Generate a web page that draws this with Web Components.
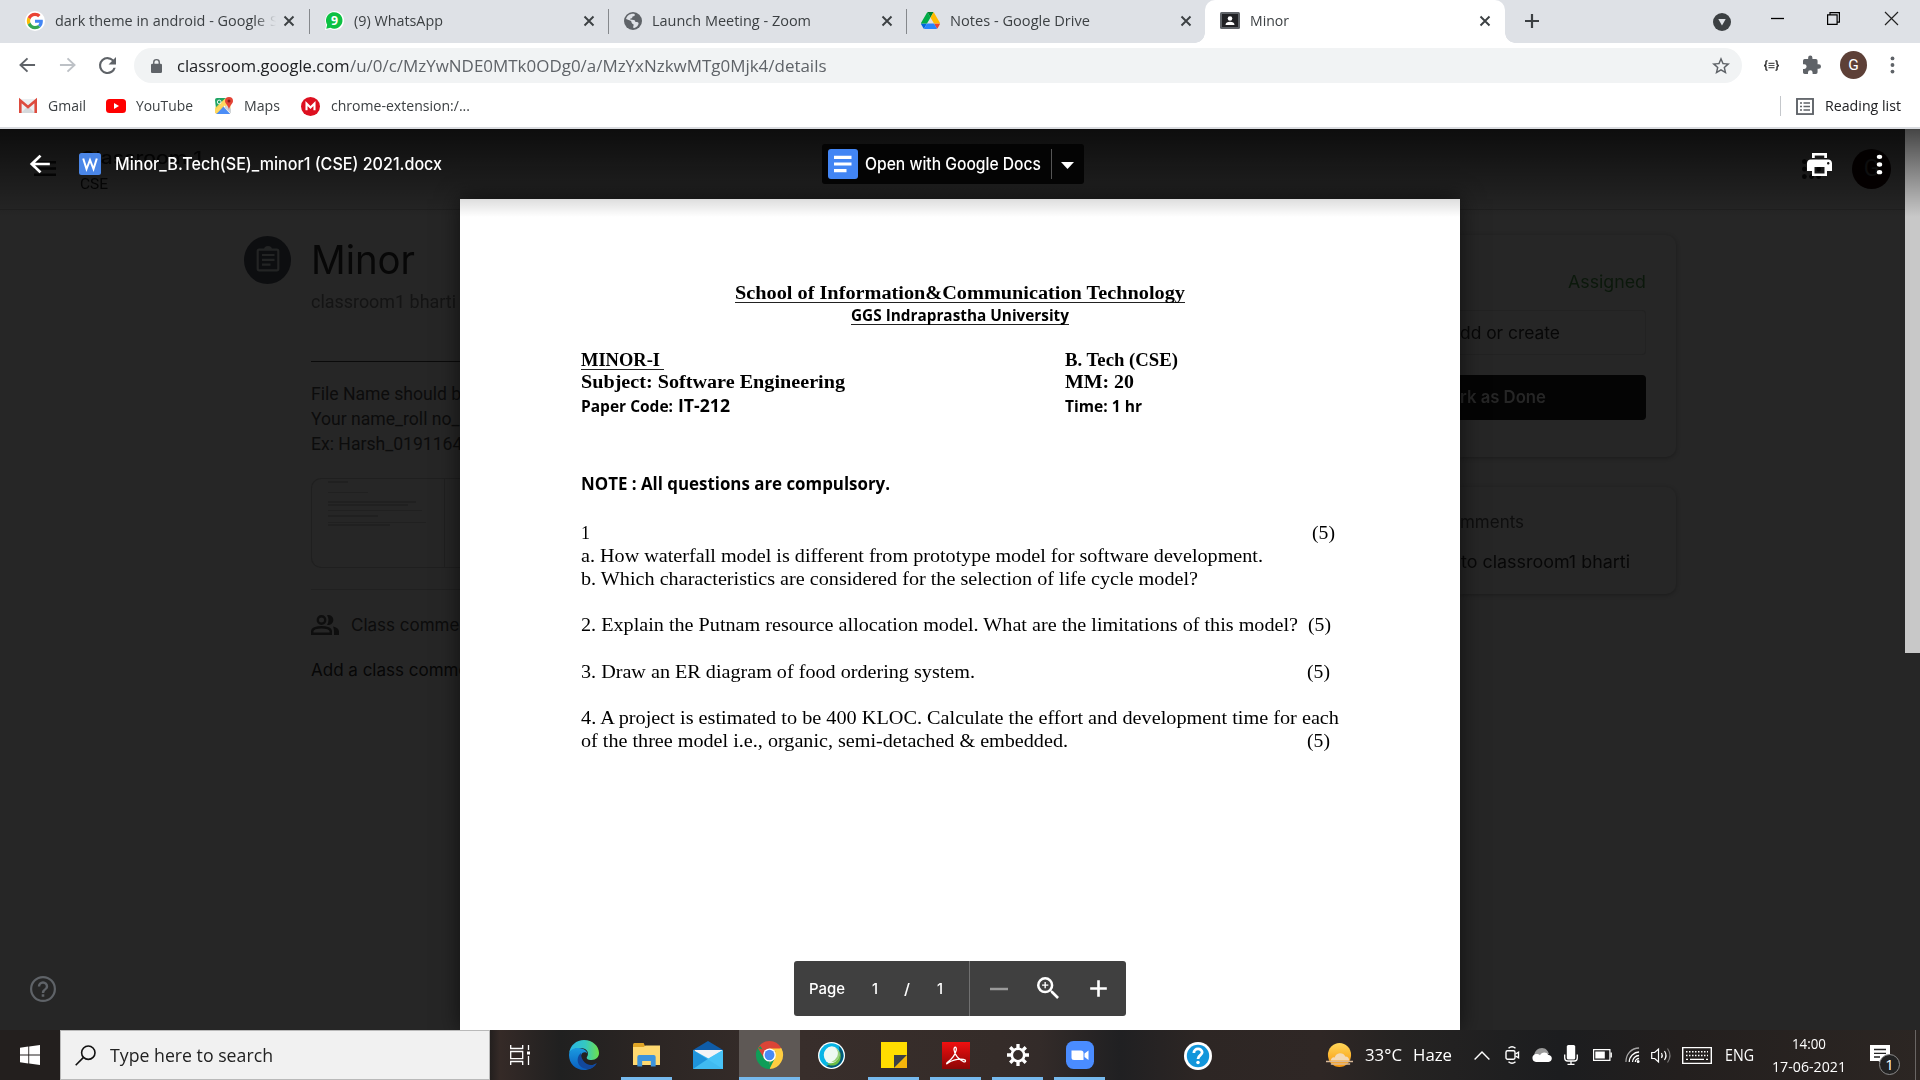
<!DOCTYPE html>
<html lang="en">
<head>
<meta charset="utf-8">
<title>Minor</title>
<style>
html,body{margin:0;width:1920px;height:1080px;overflow:hidden;background:#262626}
</style>
</head>
<body>
<desktop-screen></desktop-screen>
<script>
const define = (name, html) => customElements.define(name, class extends HTMLElement {
  constructor() {
    super();
    this.attachShadow({ mode: 'open' }).innerHTML = '<style>*{box-sizing:border-box}svg{display:block}</style>' + html;
  }
});

/* Icon set: [viewBox, markup] */
const ICONS = {
  google: ['0 0 48 48', '<circle cx="24" cy="24" r="24" fill="#fff"/><g transform="translate(4.3 4.3) scale(.82)"><path fill="#ea4335" d="M24 9.5c3.54 0 6.7 1.22 9.2 3.6l6.85-6.85C35.9 2.4 30.5 0 24 0 14.6 0 6.5 5.4 2.56 13.2l7.98 6.2C12.4 13.7 17.7 9.5 24 9.5z"/><path fill="#4285f4" d="M47 24.55c0-1.57-.15-3.1-.38-4.55H24v9h12.94c-.58 2.96-2.26 5.48-4.78 7.18l7.73 6C44.4 38 47 31.8 47 24.55z"/><path fill="#fbbc05" d="M10.5 28.6A14.5 14.5 0 0 1 9.8 24c0-1.6.27-3.14.76-4.6l-7.98-6.2A23.9 23.9 0 0 0 0 24c0 3.88.92 7.54 2.56 10.78z"/><path fill="#34a853" d="M24 48c6.48 0 11.93-2.13 15.9-5.8l-7.74-6C30 37.6 27.2 38.5 24 38.5c-6.26 0-11.57-4.22-13.47-9.9l-7.98 6.18C6.5 42.6 14.6 48 24 48z"/></g>'],
  whatsapp: ['0 0 20 20', '<path d="M0 20 1.2 14.6A10 10 0 1 1 5.600 19z" fill="#fff"/><path d="M1.300 18.600 2.300 14.500A8.700 8.700 0 1 1 5.800 17.700z" fill="#0cc143"/><text x="10" y="14.600" text-anchor="middle" font-family="Open Sans" font-weight="700" font-size="13" fill="#fff">9</text>'],
  globe: ['2 2 20 20', '<path fill="#5f6368" d="M12 2a10 10 0 1 0 0 20 10 10 0 0 0 0-20z"/><path fill="#dee1e6" d="M4.300 9.800C5 6.500 8 4 12 4c1.500 0 2 .3 2 1.200 0 1-.8 1.500-1.800 1.600-.8.1-1 .6-1 1.300 0 .8-.8 1-1.500 1-.9 0-1 .7-.7 1.300l3.800.4c1.500.2 1.800 1 1.800 2.200h2c1 0 1.600.8 1.600 1.700 0 2-2.200 4.300-4.700 5-.8.200-1.300 0-1.300-.8 0-1 .6-1.700.5-2.600-.1-1-1.700-1-2.200-2.300-.4-1.200-.2-1.800-1.200-2.200z"/>'],
  drive: ['0 0 87.3 78', '<path fill="#0066da" d="m6.600 66.850 3.850 6.650c.8 1.400 1.950 2.500 3.300 3.300l13.750-23.800h-27.500c0 1.550.4 3.100 1.200 4.500z"/><path fill="#00ac47" d="m43.650 25-13.750-23.800c-1.350.8-2.500 1.900-3.300 3.300l-25.400 44a9.060 9.060 0 0 0-1.200 4.500h27.500z"/><path fill="#ea4335" d="m73.550 76.800c1.350-.8 2.500-1.900 3.300-3.300l1.600-2.750 7.650-13.250c.8-1.400 1.200-2.950 1.200-4.500h-27.500l5.850 11.500z"/><path fill="#00832d" d="m43.650 25 13.750-23.800c-1.350-.8-2.900-1.200-4.500-1.200h-18.500c-1.600 0-3.150.45-4.500 1.200z"/><path fill="#2684fc" d="m59.800 53h-32.300l-13.750 23.800c1.350.8 2.900 1.200 4.500 1.200h50.800c1.600 0 3.150-.45 4.500-1.200z"/><path fill="#ffba00" d="m73.400 26.500-12.700-22c-.8-1.400-1.950-2.500-3.300-3.300l-13.750 23.800 16.150 28h27.450c0-1.550-.4-3.100-1.200-4.500z"/>'],
  classroom: ['0 0 20 17', '<rect width="20" height="17" rx="1.500" fill="#5f6368"/><rect x="2" y="2" width="16" height="13" fill="#202124"/><circle cx="10" cy="6.500" r="2.300" fill="#fff"/><path d="M5.500 13c0-2.200 2-3.300 4.500-3.300s4.500 1.100 4.500 3.300z" fill="#fff"/>'],
  x: ['0 0 12 12', '<path d="M1.500 1.500l9 9M10.500 1.500l-9 9" stroke="#3c4043" stroke-width="1.900"/>'],
  plus: ['0 0 16 16', '<path d="M8 1v14M1 8h14" stroke="currentColor" stroke-width="2.200"/>'],
  minus: ['0 0 16 16', '<path d="M0 8h16" stroke="currentColor" stroke-width="2.200"/>'],
  drop: ['0 0 18 18', '<circle cx="9" cy="9" r="9" fill="#3c4043"/><path d="M5.300 6h7.400L9 12.600z" fill="#dee1e6"/>'],
  wmin: ['0 0 13 13', '<path d="M0 6.500h13" stroke="#000" stroke-width="1.300"/>'],
  wmax: ['0 0 13 13', '<path d="M.6 2.900h9.500v9.500H.6zM3 2.900V.6h9.400v9.500h-2.300" fill="none" stroke="#000" stroke-width="1.200"/>'],
  wclose: ['0 0 13 13', '<path d="M0 0l13 13M13 0L0 13" stroke="#222" stroke-width="1.200"/>'],
  back: ['0 0 18 18', '<path d="M17 9H2M9 1.500L1.500 9 9 16.500" fill="none" stroke="currentColor" stroke-width="var(--sw,2)"/>'],
  reload: ['4 4 16 16', '<path fill="#5f6368" d="M17.650 6.350A7.950 7.950 0 0 0 12 4a8 8 0 1 0 7.730 10h-2.080A6 6 0 1 1 12 6c1.660 0 3.140.69 4.220 1.780L13 11h7V4z"/>'],
  lock: ['4 1 16 21', '<path fill="#5f6368" d="M18 8h-1V6A5 5 0 0 0 7 6v2H6a2 2 0 0 0-2 2v10c0 1.100.9 2 2 2h12a2 2 0 0 0 2-2V10a2 2 0 0 0-2-2zM9 6a3 3 0 1 1 6 0v2H9z"/>'],
  star: ['2 2 20 19', '<path fill="#5f6368" d="m22 9.240-7.190-.62L12 2 9.190 8.630 2 9.240l5.460 4.730L5.820 21 12 17.270 18.180 21l-1.630-7.030zM12 15.400l-3.760 2.270 1-4.280-3.320-2.880 4.380-.38L12 6.100l1.710 4.040 4.380.38-3.320 2.880 1 4.280z"/>'],
  braces: ['0 0 17 12', '<path d="M4.500.8C2.600.8 3 2 3 3.500S2.500 6 1 6c1.500 0 2 1 2 2.500S2.600 11.200 4.500 11.200M12.500.8c1.900 0 1.500 1.200 1.500 2.700S14.500 6 16 6c-1.500 0-2 1-2 2.500s.4 2.700-1.500 2.700" fill="none" stroke="#333" stroke-width="1.500"/><path d="M5.500 3.700h6M5.500 6h6M5.500 8.300h6" stroke="#555" stroke-width="1.300"/>'],
  puzzle: ['2 1.500 21 20.500', '<path fill="#5f6368" d="M20.500 11H19V7a2 2 0 0 0-2-2h-4V3.500a2.500 2.500 0 0 0-5 0V5H4a2 2 0 0 0-1.990 2v3.800H3.500a2.700 2.700 0 0 1 0 5.400H2V20c0 1.100.9 2 2 2h3.800v-1.500a2.700 2.700 0 0 1 5.400 0V22H17a2 2 0 0 0 2-2v-4h1.500a2.500 2.500 0 0 0 0-5z"/>'],
  dots: ['0 0 6 22', '<g fill="currentColor"><circle cx="3" cy="3" r="2.300"/><circle cx="3" cy="11" r="2.300"/><circle cx="3" cy="19" r="2.300"/></g>'],
  gmail: ['0 0 18 14', '<rect width="18" height="14" rx="1" fill="#eceff1"/><path d="M2 14L9 7l7 7z" fill="#d5d9dc"/><path d="M1.300 14V1.500L9 8l7.700-6.500V14" fill="none" stroke="#dd4b3e" stroke-width="2.600"/>'],
  youtube: ['0 0 20 14', '<rect width="20" height="14" rx="3.500" fill="#f00"/><path d="M8 4v6l5-3z" fill="#fff"/>'],
  maps: ['0 0 18 18', '<rect y="1" width="16" height="16" rx="2" fill="#fff"/><path d="M2 1h9L1 12 0 3a2 2 0 0 1 2-2z" fill="#1fa463"/><path d="M1 17l7-8 7 8z" fill="#4c8df6"/><path d="M0 16V11L10 1.500 15.500 6v10L9.500 8.500 2 17z" fill="#ffd34d" fill-opacity=".9"/><path d="M1.500 17l6.500-6.500L15 17z" fill="#4c8df6"/><path d="M9 10.500l3-2.500 4 4v4.500z" fill="#cfd3d7"/><path d="M14 0a4 4 0 0 1 4 4c0 3-3.500 4-4 9-.5-5-4-6-4-9a4 4 0 0 1 4-4z" fill="#e44436"/><circle cx="14" cy="4" r="1.500" fill="#8c1c13"/><circle cx="4.200" cy="5" r="1.900" fill="none" stroke="#fff" stroke-width=".9"/>'],
  mega: ['0 0 20 20', '<circle cx="10" cy="10" r="10" fill="#dd1020"/><path d="M5.800 14V6.800L10 11l4.200-4.200V14" fill="none" stroke="#fff" stroke-width="2.200"/>'],
  reading: ['0 0 18 18', '<rect x="1" y="1" width="16" height="16" fill="none" stroke="#5f6368" stroke-width="1.900"/><path d="M4 5.300h2M7.500 5.300H14M4 9h2M7.500 9H14M4 12.700h2M7.500 12.700H14" stroke="#5f6368" stroke-width="1.500"/>'],
  word: ['0 0 22 22', '<rect width="22" height="22" rx="2.500" fill="#4a86e8"/><path d="M4.200 5.500L7.500 16 11 7l3.500 9 3.300-10.500" fill="none" stroke="#fff" stroke-width="2"/>'],
  docs: ['0 0 30 30', '<rect width="30" height="30" rx="3" fill="#4285f4"/><path d="M6 8.300h17.500M6 15h17.500M6 21.700h12.500" stroke="#fff" stroke-width="3.200"/>'],
  caret: ['0 0 13 7', '<path d="M0 0h13L6.500 7z" fill="#fff"/>'],
  print: ['2 3 20 18', '<path fill="#fff" d="M19 8H5c-1.660 0-3 1.340-3 3v6h4v4h12v-4h4v-6c0-1.660-1.340-3-3-3zm-3 11H8v-5h8v5zm3-7c-.55 0-1-.45-1-1s.45-1 1-1 1 .45 1 1-.45 1-1 1zm-1-9H6v4h12V3z"/><path fill="#1a1a1a" d="M8.200 5h7.600v2H8.200z"/>'],
  menu: ['0 0 22 15', '<path d="M0 1.300h22M0 7.500h22M0 13.700h22" stroke="currentColor" stroke-width="2.500"/>'],
  apps: ['0 0 20 20', '<g fill="currentColor"><circle cx="2.500" cy="2.500" r="2.500"/><circle cx="10" cy="2.500" r="2.500"/><circle cx="17.500" cy="2.500" r="2.500"/><circle cx="2.500" cy="10" r="2.500"/><circle cx="10" cy="10" r="2.500"/><circle cx="17.500" cy="10" r="2.500"/><circle cx="2.500" cy="17.500" r="2.500"/><circle cx="10" cy="17.500" r="2.500"/><circle cx="17.500" cy="17.500" r="2.500"/></g>'],
  clip: ['0 0 47 48', '<ellipse cx="23.500" cy="24" rx="23.500" ry="24" fill="#0d0e10"/><rect x="13.700" y="13.700" width="20.600" height="20.600" rx="1.500" fill="none" stroke="#232424" stroke-width="2.200"/><path d="M20 13.500a4 3.500 0 0 1 8 0z" fill="#232424"/><path d="M18 19h12.500M18 23.800h12.500M18 28.600h8.500" stroke="#232424" stroke-width="2.200"/>'],
  people: ['0 0 28 20', '<g fill="none" stroke="#0e0e0e" stroke-width="2.400"><circle cx="10.500" cy="5" r="3.700"/><path d="M1.200 18.800v-2.300c0-3 5-4.300 9.300-4.300s9.300 1.300 9.300 4.300v2.300z"/></g><path d="M16 .2a5 5 0 1 1 0 9.600c2-2.500 2-7 0-9.600zM22 11.500c3.500.8 6 2.500 6 5V20h-5v-3.500c0-2.200-.5-3.500-1-5z" fill="#0e0e0e"/>'],
  help: ['2 2 20 20', '<path fill="#5f6368" d="M11 18h2v-2h-2v2zm1-16a10 10 0 1 0 0 20 10 10 0 0 0 0-20zm0 18.300a8.300 8.300 0 1 1 0-16.600 8.300 8.300 0 0 1 0 16.600zM12 6a4 4 0 0 0-4 4h1.900a2.100 2.100 0 0 1 4.200 0c0 2-3 1.750-3 5h1.900c0-2.250 3-2.500 3-5a4 4 0 0 0-4-4z"/>'],
  zoomin: ['3 3 17.500 17.500', '<path fill="#fff" d="M15.500 14h-.79l-.28-.27A6.470 6.470 0 0 0 16 9.500 6.500 6.500 0 1 0 9.500 16c1.610 0 3.090-.59 4.230-1.570l.27.280v.79l5 4.990L20.490 19l-4.990-5zm-6 0a4.500 4.500 0 1 1 0-9 4.500 4.500 0 0 1 0 9z"/><path d="M9.500 7v5M7 9.500h5" stroke="#fff" stroke-width="1.100"/>'],
  win: ['0 0 20 20', '<path fill="#fff" d="M0 2.800l8.300-1.200v8H0zM9.200 1.500L20 0v9.600H9.200zM0 10.500h8.300v8L0 17.300zM9.200 10.500H20V20L9.200 18.600z"/>'],
  search: ['0 0 21 21', '<g fill="none" stroke="#111" stroke-width="1.600"><circle cx="13.300" cy="7.700" r="6.700"/><path d="M8.500 12.400L.7 20.300"/></g>'],
  taskview: ['0 0 20 20', '<g fill="none" stroke="#fff" stroke-width="1.300"><path d="M.7 0v3.500h12V0M.7 20v-3.500h12V20M.7 6.500h12v7.200H.7zM18.500 0v5M18.500 11v9"/></g><path d="M17 6.500h3v3h-3z" fill="#fff"/>'],
  edge: ['0 0 30 30', '<defs><linearGradient id="a" x1="0" x2="1"><stop stop-color="#27b5e8"/><stop offset=".55" stop-color="#36c8c0"/><stop offset="1" stop-color="#6ee04a"/></linearGradient><linearGradient id="b" x1="0" x2="0" y2="1"><stop stop-color="#1a9ae0"/><stop offset="1" stop-color="#0a5fc0"/></linearGradient></defs><path d="M0 14C1 5 7.500 0 15 0c8.500 0 15 6 15 13 0 4-3 7-7.500 7-4 0-5.500-1.500-4.500-3 3-5-1-9-6-9S1 10 0 14z" fill="url(#a)"/><path d="M0 15C0 10 5 7.500 10 8c5 .3 8 3 8.500 6-1-2.500-6-2.500-6.500 2-.5 5 5 10 10 9.500 2 0 4-1 5.500-2.500C25 27.500 20 30 15 30 6.500 30 0 23.500 0 15z" fill="url(#b)"/><path d="M12 13c-4 3-4.500 9-1 13 3 3 8 4 12 2 2-1 4-3 4.800-5-4 3-9 2.500-12-.5-2.500-2.500-4-5.500-3.800-9.500z" fill="#12489c"/>'],
  folder: ['0 0 28 24', '<path d="M0 1.500Q0 0 1.500 0H11l2 4H0z" fill="#e0a526"/><path d="M0 4h11l2-1.500h15V22H0z" fill="#ffd970"/><path d="M4.500 23.500V14Q4.500 12 6.500 12h15q2 0 2 2v9.500h-5V18h-9v5.500z" fill="#3d94dc"/>'],
  mail: ['0 0 30 28', '<path d="M0 9L15 0l15 9z" fill="#0f5ca8"/><path d="M1.500 9H29v9H1.500z" fill="#f3f3f6"/><path d="M0 9l15.500 8.500L30 9v19H0z" fill="#3cb9f2"/><path d="M0 28V9l30 19z" fill="#1e93db"/><path d="M0 28L15.500 17.500 30 9v19z" fill="#4cc7f8" fill-opacity=".75"/>'],
  chrome: ['0 0 48 48', '<path d="M24 24L3.200 12A24 24 0 0 1 44.800 12z" fill="#db4437"/><path d="M24 24L44.800 12A24 24 0 0 1 24 48z" fill="#ffcd40"/><path d="M24 24V48A24 24 0 0 1 3.200 12z" fill="#0f9d58"/><path d="M24 13h20.800a24 24 0 0 1 2 5H24z" fill="#ffcd40"/><path d="M33.500 29.500L24 48h-4l8-17zM14.500 29.500L3.200 12l5-3 8 14z" fill="#0f9d58"/><path d="M3.200 12l11.300 17.500L20 17z" fill="#db4437"/><circle cx="24" cy="24" r="11.300" fill="#fff"/><circle cx="24" cy="24" r="8.800" fill="#4a8af4"/>'],
  webex: ['0 0 28 28', '<circle cx="14" cy="14" r="14" fill="#fff"/><circle cx="14" cy="14" r="12.600" fill="#07b5e6"/><path d="M14 26.600A12.600 12.600 0 0 0 21.500 4c2.500 8-2 18-13 21 1.500 1 3.500 1.600 5.500 1.600z" fill="#045876"/><ellipse cx="14.300" cy="13.500" rx="8.300" ry="9" fill="#eef9f2"/><path d="M22 8.500c2.300 8-4 15.500-13.500 13.500 5 4.500 13 2.500 14.700-4.500.8-3.500.3-6.500-1.200-9z" fill="#6cbe45"/><path d="M18 6q4 4 2 9-2 4-6.500 6Q21 21 22.500 14 22.500 8 18 6z" fill="#9ad07a"/>'],
  sticky: ['0 0 26 26', '<path d="M0 0h26v26H0z" fill="#ffdd00"/><path d="M13 26V13h13z" fill="#3b3f46"/><path d="M13.500 26L26 13.500V26z" fill="#f5b50a"/>'],
  pdf: ['0 0 28 26', '<defs><linearGradient id="p" x2="0" y2="1"><stop stop-color="#f01010"/><stop offset="1" stop-color="#8c0505"/></linearGradient></defs><path d="M0 0h28v26H0z" fill="url(#p)"/><path d="M5 20c3.500-2.500 8-6.500 9.300-12.500.5-3-2.500-3.500-2.300 0 .5 5 5 9.500 9.500 11.500 2.500.8 3-1.800 0-2.300-5-.5-11.500 1-15.500 3.500-1.500 1-1.500 1-1-.2z" fill="none" stroke="#fff" stroke-width="1.300"/>'],
  gear: ['0 0 24 24', '<g stroke="#fff" fill="none"><circle cx="12" cy="12" r="6.800" stroke-width="2.900"/><g stroke-width="3.600"><path d="M12 0v4.600M12 19.400V24M0 12h4.600M19.400 12H24M3.500 3.500l3.300 3.300M17.200 17.200l3.300 3.300M3.500 20.500l3.300-3.300M17.200 6.800l3.300-3.300"/></g></g>'],
  zoomapp: ['0 0 28 28', '<rect width="28" height="28" rx="7.500" fill="#4a8cff"/><path d="M5.500 9.500H15q2.500 0 2.500 2.500v7H8q-2.500 0-2.500-2.500zM18.500 12.500l4-3v9.500l-4-3z" fill="#fff"/>'],
  helpblue: ['0 0 27 27', '<circle cx="13.500" cy="13.500" r="13.500" fill="#fff"/><circle cx="13.500" cy="13.500" r="10.800" fill="#1296db"/><path d="M9.500 10.500c0-5 8-5 8-.5 0 3-4 3-4 6.300" fill="none" stroke="#fff" stroke-width="2.700"/><circle cx="13.500" cy="19.700" r="1.700" fill="#fff"/>'],
  weather: ['0 0 28 25', '<defs><linearGradient id="s" x2="0" y2="1"><stop stop-color="#ffd75a"/><stop offset="1" stop-color="#f8960a"/></linearGradient></defs><circle cx="14" cy="12" r="12" fill="url(#s)"/><path d="M5 17.500a3 3 0 0 1 4-3 6 6 0 0 1 11-1c3 0 4 2 4 4z" fill="#f3d9b5"/><path d="M0 18.500h28M5 21h20" stroke="#d9b998" stroke-width="1.300"/>'],
  up: ['0 0 16 9', '<path d="M.6 8.500L8 1l7.400 7.500" fill="none" stroke="#fff" stroke-width="1.400"/>'],
  meet: ['0 0 16 19', '<g fill="none" stroke="#fff" stroke-width="1.400"><rect x="1" y="5" width="9" height="9" rx="1.500"/><path d="M10.500 8.500l3-2v6l-3-2M3.500 2.300q3.500-3 7 0M3.500 16.700q3.500 3 7 0"/></g>'],
  cloud: ['0 0 20 14', '<path d="M2 9C2 3 6 0 10 0s6 3 7 6z" fill="#9a9a9a"/><path d="M4 14a4 4 0 0 1-1-7.700c2-.5 4 0 5 1 1-3.500 7-4 8-.5 5 .3 5 6.700.5 7.200z" fill="#fff"/>'],
  mic: ['0 0 14 20', '<rect x="2.800" width="8.400" height="14.500" rx="1.500" fill="#fff"/><path d="M.7 9.500v3.500q0 3 3 3h6.600q3 0 3-3V9.500M7 16v3.300M3.500 19.300h7" fill="none" stroke="#fff" stroke-width="1.300"/>'],
  battery: ['0 0 19 12', '<path d="M.6.6h16.300v10.800H.6zM18.300 3.500v5" fill="none" stroke="#fff" stroke-width="1.200"/><path d="M2.300 2.500h9.500v7H2.300z" fill="#fff"/>'],
  wifi: ['0 0 16 16', '<g fill="none" stroke="#fff" stroke-width="1.300"><path d="M1 15C1 7 7 1 15 1" opacity=".6"/><path d="M4.500 15C4.500 9.500 9.500 5 15 5M8 15c0-3.500 3-6.500 7-6.500M11 15c0-2 2-3.500 4-3.500"/></g><circle cx="14" cy="14.500" r="1.500" fill="#fff"/>'],
  vol: ['0 0 20 17', '<g fill="none" stroke="#fff" stroke-width="1.200"><path d="M.7 5.500h3L7.500 2v13l-3.800-3.500h-3zM10.500 6q1.500 2.500 0 5M13.500 4q3 4.500 0 9"/><path d="M16.500 1.500q5 7 0 14" opacity=".4"/></g>'],
  kbd: ['0 0 30 18', '<path d="M.7.7h28.600v16.600H.7z" fill="none" stroke="#fff" stroke-width="1.400"/><path d="M4 5h22M4 9h22" stroke="#fff" stroke-width="1.500" stroke-dasharray="1.500 1.500"/><path d="M4 13h2M8 13h14M24 13h2" stroke="#fff" stroke-width="1.300"/>'],
  note: ['0 0 20 20', '<path d="M0 0h20v16h-7v4l-4.500-4H0z" fill="#fff"/><path d="M4 4.500h12M4 8.300h12M4 12h6" stroke="#222" stroke-width="1.300"/>']
};
customElements.define('ui-icon', class extends HTMLElement {
  connectedCallback() {
    if (this.shadowRoot) return;
    const [vb, body] = ICONS[this.getAttribute('name')];
    const w = this.getAttribute('w'), h = this.getAttribute('h') || w;
    this.attachShadow({ mode: 'open' }).innerHTML =
      `<style>:host{display:block;flex:none;width:${w}px;height:${h}px}svg{display:block;overflow:visible}</style>
       <svg width="${w}" height="${h}" viewBox="${vb}" preserveAspectRatio="none">${body}</svg>`;
  }
});

/* A browser tab: favicon, title and close cross */
customElements.define('browser-tab', class extends HTMLElement {
  connectedCallback() {
    if (this.shadowRoot) return;
    const on = this.hasAttribute('active');
    this.attachShadow({ mode: 'open' }).innerHTML = `<style>
      :host{display:flex;align-items:center;flex:none;height:43px;box-sizing:border-box;padding:0 14px 2px 16px;position:relative;font:14.500px "Open Sans",sans-serif;color:#3c4043}
      .t{flex:1;margin-left:10px;line-height:40px;height:40px;white-space:nowrap;overflow:hidden;min-width:0}
      ${on ? ':host{background:#fff;border-radius:10px 10px 0 0}' : ''}
      i{position:absolute;bottom:0;width:10px;height:10px}
      .l{left:-10px;background:radial-gradient(circle at 0 0,#dee1e6 9.500px,#fff 10px)}
      .r{right:-10px;background:radial-gradient(circle at 100% 0,#dee1e6 9.500px,#fff 10px)}
      </style><slot name="icon"></slot><div class="t"><slot></slot></div><ui-icon name="x" w="12"></ui-icon>${on ? '<i class="l"></i><i class="r"></i>' : ''}`;
  }
});

define('tab-strip', `<style>
:host{display:flex;height:43px;background:#dee1e6;color:#3c4043}
.sep{width:1px;height:25px;background:#85888c;margin-top:9px;flex:none}
.fade{-webkit-mask-image:linear-gradient(90deg,#000 200px,transparent 221px);display:flex;gap:5px;width:221px;overflow:hidden}
.c{display:flex;align-items:center;height:41px}
</style>
<browser-tab style="width:301px;margin-left:8px;padding-left:17px"><ui-icon slot="icon" name="google" w="20"></ui-icon><div class="fade"><fit-text w="210">dark theme in android - Google</fit-text><span>S</span></div></browser-tab><div class="sep"></div>
<browser-tab style="width:298px;padding-left:15px;padding-right:13px"><ui-icon slot="icon" name="whatsapp" w="19"></ui-icon><fit-text w="89">(9) WhatsApp</fit-text></browser-tab><div class="sep"></div>
<browser-tab style="width:297px;padding-left:15px;padding-right:13px"><ui-icon slot="icon" name="globe" w="18"></ui-icon><fit-text w="159">Launch Meeting - Zoom</fit-text></browser-tab><div class="sep"></div>
<browser-tab style="width:298px;padding-left:14px;padding-right:13px"><ui-icon slot="icon" name="drive" w="19" h="17"></ui-icon><fit-text w="140">Notes - Google Drive</fit-text></browser-tab>
<browser-tab active style="width:300px;padding-left:15px"><ui-icon slot="icon" name="classroom" w="20" h="17"></ui-icon><fit-text w="39">Minor</fit-text></browser-tab>
<div class="c"><ui-icon name="plus" w="16" style="margin-left:19px"></ui-icon><ui-icon name="drop" w="18" style="margin-left:173px;margin-top:2px"></ui-icon></div>
<div class="c" style="height:37px"><ui-icon name="wmin" w="13" style="margin-left:40px"></ui-icon><ui-icon name="wmax" w="13" style="margin-left:43px"></ui-icon><ui-icon name="wclose" w="13" style="margin-left:45px"></ui-icon></div>`);

define('tool-bar', `<style>
:host{display:flex;align-items:center;height:44px;background:#fff;color:#5f6368;padding-left:19px}
.box{display:flex;align-items:center;margin-left:18px;width:1608px;height:35px;border-radius:18px;background:#f1f3f4;font:17px/35px "Open Sans",sans-serif;padding:1px 12px 0 17px}
.av{width:27px;height:28px;border-radius:50%;background:#5d4037;color:#fff;font:15.500px/28px Roboto,sans-serif;text-align:center;margin-left:19px}
</style>
<ui-icon name="back" w="17" h="16"></ui-icon><ui-icon name="back" w="17" h="16" style="margin-left:23px;transform:scaleX(-1);color:#bdc1c6"></ui-icon><ui-icon name="reload" w="17" style="margin-left:23px"></ui-icon>
<div class="box"><ui-icon name="lock" w="11" h="14"></ui-icon><fit-text w="172.500" style="margin-left:15px;color:#202124">classroom.google.com</fit-text><fit-text w="476.500">/u/0/c/MzYwNDE0MTk0ODg0/a/MzYxNzkwMTg0Mjk4/details</fit-text><div style="flex:1"></div><ui-icon name="star" w="18" h="17"></ui-icon></div>
<ui-icon name="braces" w="17" h="11" style="margin-left:21px"></ui-icon><ui-icon name="puzzle" w="18" style="margin-left:23px"></ui-icon><div class="av">G</div><ui-icon name="dots" w="5" h="18" style="margin-left:23px"></ui-icon>`);

define('bookmark-bar', `<style>
:host{display:flex;align-items:center;height:42px;background:#fff;border-bottom:2px solid #dadce0;color:#3c4043;font:14.500px/38px "Open Sans",sans-serif;padding:0 19px 2px 19px}
.s{width:1px;height:20px;background:#c4c7cb}
</style>
<ui-icon name="gmail" w="18" h="14"></ui-icon><fit-text w="38" style="margin-left:11px">Gmail</fit-text>
<ui-icon name="youtube" w="20" h="14" style="margin-left:20px"></ui-icon><fit-text w="57" style="margin-left:10px">YouTube</fit-text>
<ui-icon name="maps" w="18" h="18" style="margin-left:22px"></ui-icon><fit-text w="36" style="margin-left:11px">Maps</fit-text>
<ui-icon name="mega" w="19" style="margin-left:21px"></ui-icon><fit-text w="139" style="margin-left:11px">chrome-extension:/...</fit-text>
<div style="flex:1"></div><div class="s"></div><ui-icon name="reading" w="18" h="17" style="margin-left:15px"></ui-icon><fit-text w="76" style="margin-left:11px;color:#202124">Reading list</fit-text>`);

/* Dimmed classroom page, laid out behind the viewer */
define('classroom-page', `<style>
:host{display:flex;flex-direction:column;position:relative;height:901px;background:#262626;font-family:Inter,sans-serif;color:#070707}
.top{display:flex;height:81px;border-bottom:1px solid #202020;color:#060606;flex:none}
.names{margin-left:24px;padding-top:13px;width:1700px}
.cols{display:flex;flex:1}
.ic{width:47px;margin:26px 0 0 244px;flex:none}
.main{margin-left:20px;width:149px;overflow:hidden;white-space:nowrap;flex:none;padding-top:24px}
.r{font:17.600px/25px Roboto,sans-serif}
.card{border:1px solid #1f1f1f;border-right:0;border-radius:10px 0 0 10px;height:90px;margin-top:21px;display:flex}
.th{width:133px;border-right:1px solid #1f1f1f;padding:2px 16px;display:flex;flex-direction:column}
.th i{height:1.500px;background:#202020}
.side{margin-left:1000px;width:216px}
.pc{border-radius:0 10px 10px 0;box-shadow:0 1px 4px rgba(0,0,0,.3);padding-right:30px;overflow:hidden;box-sizing:border-box}
.av{width:39px;height:40px;border-radius:50%;background:#050000;color:#161616;font:23px/40px Roboto,sans-serif;text-align:center;margin:20px 0 0 31px}
.bar{position:absolute;right:0;top:0;width:15px;height:524px;background:#c8c8c8}
</style>
<div class="top"><ui-icon name="menu" w="22" h="15" style="margin:32px 0 0 34px"></ui-icon>
<div class="names"><fit-text w="122" style="font:500 17.500px/32px Inter;display:block">Classroom 1</fit-text><fit-text w="28" style="font:15.500px/18px Roboto;display:block;margin-top:1px">CSE</fit-text></div>
<ui-icon name="apps" w="19" h="20" style="margin:30px 0 0 22px"></ui-icon><div class="av">G</div></div>
<div class="cols"><ui-icon class="ic" name="clip" w="47" h="48"></ui-icon>
<div class="main"><fit-text w="104" style="font-size:39px;line-height:52px">Minor</fit-text>
<div class="r" style="color:#141414;margin-top:4px;height:25px"><fit-text w="145">classroom1 bharti</fit-text></div>
<div style="height:1px;background:#0a0a0a;margin:46px 0 20px"></div>
<div class="r" style="color:#0c0c0c"><div>File Name should be</div><div>Your name_roll no_</div><div>Ex: Harsh_0191164</div></div>
<div class="card"><div class="th"><i style="width:20px"></i><i style="width:40px;margin-top:9px"></i><i style="width:88px;margin-top:8px"></i><i style="width:80px;margin-top:1.500px"></i><i style="width:94px;margin-top:4px"></i><i style="width:50px;margin-top:4px"></i><i style="width:98px;margin-top:5px"></i><i style="width:62px;margin-top:1px"></i></div></div>
<div style="height:1px;background:#202020;margin-top:21px"></div>
<div style="display:flex;align-items:center;margin-top:23px;height:24px;gap:12px"><ui-icon name="people" w="28" h="20"></ui-icon><span style="font-size:17px;color:#0c0c0c">Class comments</span></div>
<div style="font-size:17px;line-height:24px;margin-top:21px">Add a class comment</div></div>
<div class="side"><div class="pc" style="height:222px;margin-top:25px;display:flex;flex-direction:column;align-items:flex-end;font-size:17px">
<fit-text w="78" style="color:#0b180b;margin-top:35px;line-height:24px">Assigned</fit-text>
<div style="width:100%;height:45px;margin-top:16px;border:1px solid #222;border-left:0;border-radius:0 4px 4px 0;line-height:45px"><fit-text w="100">dd or create</fit-text></div>
<div style="width:100%;height:45px;margin-top:20px;background:#040404;border-radius:0 4px 4px 0;color:#262626;font-weight:600;line-height:44px"><fit-text w="86">rk as Done</fit-text></div></div>
<div class="pc" style="height:107px;margin-top:30px;font-size:17px;line-height:24px;padding-top:23px"><fit-text w="64" style="color:#0e0e0e;display:block">mments</fit-text><fit-text w="169" style="display:block;margin:16px 0 0 1px">to classroom1 bharti</fit-text></div>
</div></div>
<div class="bar"></div>`);

define('exam-paper', `<style>
:host{display:block;width:1000px;height:831px;background:#fff;color:#000;padding:82px 120px 0 121px;box-sizing:border-box;box-shadow:0 0 22px rgba(0,0,0,.6);font:19.600px/23px "Liberation Serif",serif}
.l{display:flex;height:23px}
.c{font:700 17.500px/23px "Open Sans",sans-serif}.s{font-size:16.500px}
.u{border-bottom:1.500px solid #222;height:21.500px}
</style>
<div class="l"><fit-text class="u" w="450" style="margin-left:154px;font-weight:700">School of Information&amp;Communication Technology</fit-text></div>
<div class="l"><fit-text class="c s u" w="218" style="margin-left:270px;height:21px;line-height:22px">GGS Indraprastha University</fit-text></div>
<div class="l" style="margin-top:21px"><div class="u" style="width:83px"><fit-text w="79" style="font-weight:700">MINOR-I</fit-text></div><fit-text w="113" style="margin-left:401px;font-weight:700">B. Tech (CSE)</fit-text></div>
<div class="l" style="margin-top:-1px"><fit-text w="264" style="font-weight:700">Subject: Software Engineering</fit-text><fit-text w="69" style="margin-left:220px;font-weight:700">MM: 20</fit-text></div>
<div class="l" style="margin-top:1px"><fit-text class="c s" w="92">Paper Code:</fit-text><fit-text class="c" w="52" style="margin-left:5px">IT-212</fit-text><fit-text class="c s" w="77" style="margin-left:335px">Time: 1 hr</fit-text></div>
<div class="l" style="margin-top:55px"><fit-text class="c" w="309">NOTE : All questions are compulsory.</fit-text></div>
<div class="l" style="margin-top:26px"><fit-text w="9">1</fit-text><fit-text w="23" style="margin-left:722px">(5)</fit-text></div>
<div class="l"><fit-text w="682">a. How waterfall model is different from prototype model for software development.</fit-text></div>
<div class="l"><fit-text w="617">b. Which characteristics are considered for the selection of life cycle model?</fit-text></div>
<div class="l" style="margin-top:23px"><fit-text w="717">2. Explain the Putnam resource allocation model. What are the limitations of this model?</fit-text><fit-text w="23" style="margin-left:10px">(5)</fit-text></div>
<div class="l" style="margin-top:24px"><fit-text w="394">3. Draw an ER diagram of food ordering system.</fit-text><fit-text w="23" style="margin-left:332px">(5)</fit-text></div>
<div class="l" style="margin-top:23px"><fit-text w="758">4. A project is estimated to be 400 KLOC. Calculate the effort and development time for each</fit-text></div>
<div class="l"><fit-text w="487">of the three model i.e., organic, semi-detached &amp; embedded.</fit-text><fit-text w="23" style="margin-left:239px">(5)</fit-text></div>`);

define('viewer-head', `<style>
:host{display:flex;height:70px;color:#fff;font:500 17px/40px Inter,sans-serif;align-items:center;padding-left:30px}
.o{display:flex;align-items:center;width:262px;height:40px;background:#040404;border-radius:3px;padding-left:6px;margin-left:380px}
.d{width:1px;height:30px;background:#555;margin-left:10px}
</style>
<ui-icon name="back" w="21" h="20" style="--sw:2.400"></ui-icon><ui-icon name="word" w="22" style="margin-left:28px"></ui-icon><fit-text w="327" style="margin-left:14px">Minor_B.Tech(SE)_minor1 (CSE) 2021.docx</fit-text>
<div class="o"><ui-icon name="docs" w="30"></ui-icon><fit-text w="176" style="margin-left:7px;line-height:42px">Open with Google Docs</fit-text><div class="d"></div><ui-icon name="caret" w="13" h="7" style="margin-left:9px;margin-top:2px"></ui-icon></div>
<ui-icon name="print" w="25" h="23" style="margin-left:723px"></ui-icon><ui-icon name="dots" w="7" h="21" style="margin-left:44px"></ui-icon>`);

define('page-controls', `<style>
:host{display:flex;align-items:center;width:332px;height:55px;background:#404040;border-radius:3px;color:#fff;font:500 15px/58px Inter,sans-serif}
.d{width:1px;height:55px;background:#707070;margin-left:25px}
</style>
<fit-text w="36" style="margin-left:15px">Page</fit-text><fit-text w="6" style="margin-left:27px">1</fit-text><fit-text w="6" style="margin-left:26px">/</fit-text><fit-text w="6" style="margin-left:27px">1</fit-text><div class="d" style="margin-left:26px"></div>
<ui-icon name="minus" w="18" h="18" style="margin-left:20px;color:#9a9a9a"></ui-icon><ui-icon name="zoomin" w="22" style="margin-left:29px;margin-bottom:2px"></ui-icon><ui-icon name="plus" w="19" style="margin-left:30px"></ui-icon>`);

/* One taskbar button; "open" draws the running marker */
define('task-button', `<style>
:host{display:flex;flex-direction:column;align-items:center;width:61px;height:50px;flex:none;color:#76b9ed}
:host([active]){background:#5e5855}
.i{height:47px;display:flex;align-items:center;padding-top:3px}
.m{height:3px;width:51px}
:host([open]) .m{background:#76b9ed}:host([active]) .m{width:61px}
</style><div class="i"><slot></slot></div><div class="m"></div>`);

define('task-bar', `<style>
:host{display:flex;height:50px;align-items:center;color:#fff;font:17px/50px "Open Sans",sans-serif;background:linear-gradient(90deg,#231f1e 0,#231f1e 490px,#352a27 500px,#202020 560px,#2b2523 640px,#382e2b 800px,#352c29 1000px,#332b29 1040px,#202022 1120px,#2d2624 1200px,#2f2725 1320px,#252322 1400px,#1c1d1f 1560px,#231f1e 1680px,#2c2623 1920px)}
.s{display:flex;align-items:center;width:430px;height:50px;background:#f1f1f1;border:1px solid #b9b9b9;margin-left:20px;padding-left:14px;color:#222;line-height:48px;font-size:17.500px}
.clk{width:76px;margin-left:17px;font-size:15px;line-height:23px;display:flex;flex-direction:column;align-items:center}
.n{position:relative;margin-left:23px;width:20px;height:20px}
.b{position:absolute;left:9px;top:9px;width:21px;height:21px;border-radius:50%;border:1.500px solid #8b8b8b;background:#222;font:15px/18px "Open Sans",sans-serif;text-align:center}
.e{width:1px;height:50px;background:#6a6664;margin-left:25px}
</style>
<ui-icon name="win" w="20" style="margin-left:20px"></ui-icon>
<div class="s"><ui-icon name="search" w="21"></ui-icon><fit-text w="163" style="margin-left:14px">Type here to search</fit-text></div>
<ui-icon name="taskview" w="20" style="margin-left:20px"></ui-icon>
<task-button style="margin-left:24px;width:60px"><ui-icon name="edge" w="30"></ui-icon></task-button>
<task-button open style="margin-left:2px"><ui-icon name="folder" w="27" h="24"></ui-icon></task-button>
<task-button><ui-icon name="mail" w="30" h="28"></ui-icon></task-button>
<task-button active open style="margin-left:1px"><ui-icon name="chrome" w="27" h="28"></ui-icon></task-button>
<task-button style="margin-left:1px"><ui-icon name="webex" w="27" h="27"></ui-icon></task-button>
<task-button open style="margin-left:1px"><ui-icon name="sticky" w="26"></ui-icon></task-button>
<task-button open style="margin-left:1px"><ui-icon name="pdf" w="28" h="27"></ui-icon></task-button>
<task-button open style="margin-left:1px"><ui-icon name="gear" w="22"></ui-icon></task-button>
<task-button open style="margin-left:1px"><ui-icon name="zoomapp" w="28"></ui-icon></task-button>
<task-button style="margin-left:57px"><ui-icon name="helpblue" w="28" style="margin-top:2px"></ui-icon></task-button>
<ui-icon name="weather" w="27" h="25" style="margin-left:98px"></ui-icon><fit-text w="37" style="margin-left:12px">33°C</fit-text><fit-text w="39" style="margin-left:11px">Haze</fit-text>
<ui-icon name="up" w="16" h="9" style="margin-left:22px"></ui-icon><ui-icon name="meet" w="16" h="18" style="margin-left:15px"></ui-icon><ui-icon name="cloud" w="20" h="14" style="margin-left:11px"></ui-icon><ui-icon name="mic" w="14" h="20" style="margin-left:12px"></ui-icon><ui-icon name="battery" w="19" h="12" style="margin-left:15px"></ui-icon><ui-icon name="wifi" w="15" h="16" style="margin-left:13px"></ui-icon><ui-icon name="vol" w="20" h="17" style="margin-left:11px"></ui-icon><ui-icon name="kbd" w="30" h="17" style="margin-left:11px"></ui-icon>
<fit-text w="29" style="margin-left:13px;font-size:16px">ENG</fit-text>
<div class="clk"><fit-text w="34">14:00</fit-text><fit-text w="74">17-06-2021</fit-text></div>
<div class="n"><ui-icon name="note" w="20"></ui-icon><div class="b">1</div></div><div class="e"></div>`);

define('desktop-screen', `<style>
:host{display:flex;flex-direction:column;width:1920px;height:1080px;overflow:hidden}
.v{position:relative;height:901px;overflow:hidden;flex:none}
.over{position:absolute;inset:0;display:flex;justify-content:center;padding-top:70px}
.shade{position:absolute;inset:0 0 auto 0;height:88px;background:linear-gradient(rgba(0,0,0,.65),rgba(0,0,0,0))}
.head{position:absolute;inset:0 0 auto 0}
.pc{position:absolute;left:794px;bottom:14px}
.help{position:absolute;left:30px;bottom:28px}
</style>
<tab-strip></tab-strip><tool-bar></tool-bar><bookmark-bar></bookmark-bar>
<div class="v"><classroom-page></classroom-page><div class="over"><exam-paper></exam-paper></div><div class="shade"></div><viewer-head class="head"></viewer-head><page-controls class="pc"></page-controls><ui-icon class="help" name="help" w="26"></ui-icon></div>
<task-bar></task-bar>`);

/* Sets a run of text to an exact width by horizontal scaling */
customElements.define('fit-text', class extends HTMLElement {
  connectedCallback() {
    if (this.shadowRoot) return;
    const w = parseFloat(this.getAttribute('w'));
    this.attachShadow({ mode: 'open' }).innerHTML =
      `<style>:host{display:inline-block;flex:none;width:${w}px;white-space:nowrap}span{display:inline-block;transform-origin:0 50%;vertical-align:top}</style><span><slot></slot></span>`;
    const s = this.shadowRoot.querySelector('span');
    const n = s.getBoundingClientRect().width;
    if (n) s.style.transform = `scaleX(${w / n})`;
  }
});
</script>
</body>
</html>
